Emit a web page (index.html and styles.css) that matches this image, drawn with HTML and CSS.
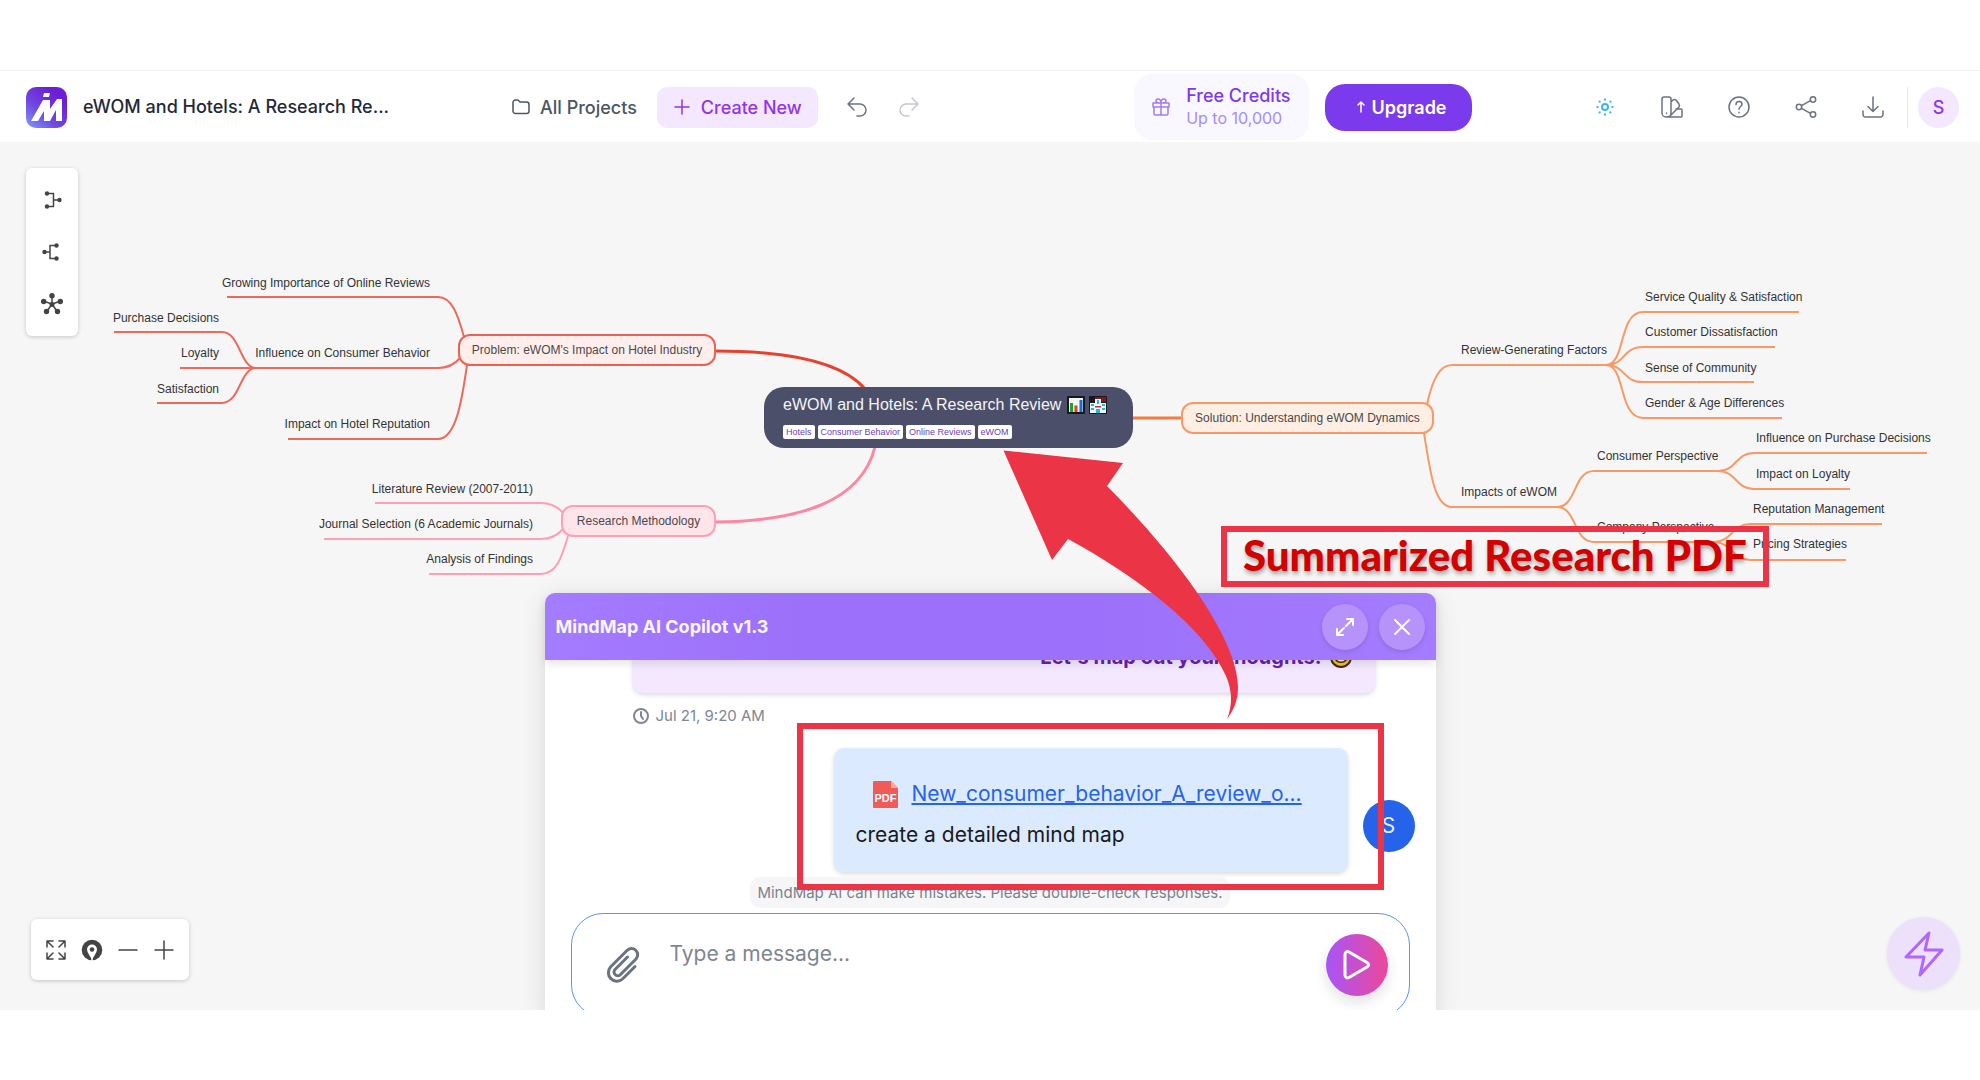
FILE: index.html
```html
<!DOCTYPE html>
<html lang="en">
<head>
<meta charset="utf-8">
<meta name="viewport" content="width=device-width, initial-scale=1">
<title>eWOM and Hotels: A Research Review</title>
<link rel="stylesheet" href="styles.css">
</head>
<body>
<header class="topbar">
  <svg class="logo" viewBox="0 0 41 41" aria-hidden="true">
    <defs><linearGradient id="logoFill" x1="0" y1="1" x2="0.7" y2="0.2"><stop offset="0" stop-color="#7f9bff"/><stop offset="0.5" stop-color="#7048e0"/><stop offset="1" stop-color="#6d1fd8"/></linearGradient></defs>
    <rect width="41" height="41" rx="10" fill="url(#logoFill)"/>
    <path d="M18 6h6l-1 4h-6zM5 34 17 13h7v9l7-10h5v22h-6V23l-6 11h-6V24l-6 10z" fill="#fff"/>
  </svg>
  <h1 class="doc-title">eWOM and Hotels: A Research Re...</h1>
  <nav class="nav">
    <a class="projects" href="#projects">
      <svg class="i18" viewBox="0 0 18 18"><path d="M1 4.500a2.500 2.500 0 0 1 2.500-2.500H6l2 2h6.500A2.500 2.500 0 0 1 17 6.500v6.500a2.500 2.500 0 0 1-2.500 2.500h-11A2.500 2.500 0 0 1 1 13z"/></svg>
      All Projects</a>
    <button class="create" type="button"><svg class="i18" viewBox="0 0 18 18"><path d="M9 2v14M2 9h14"/></svg>Create New</button>
    <button class="icon-btn undo" type="button" aria-label="Undo"><svg class="i22" viewBox="0 0 22 22"><path d="M8 2 2 8l6 6M2 8h12a6 6 0 0 1 0 12h-3"/></svg></button>
    <button class="icon-btn redo" type="button" aria-label="Redo" disabled><svg class="i22" viewBox="0 0 22 22"><path d="m14 2 6 6-6 6M20 8H8a6 6 0 0 0 0 12h3"/></svg></button>
  </nav>
  <div class="space-wide"></div>
  <button class="credits" type="button">
    <svg class="i18" viewBox="0 0 18 18"><path d="M1 5h16v4H1zM2 9h14v6.500a1.500 1.500 0 0 1-1.500 1.500h-11A1.500 1.500 0 0 1 2 15.500zM9 5v12M9 5C5 5 4 4 4 3s1-2 2-2c2 0 3 2 3 4 0-2 1-4 3-4 1 0 2 1 2 2s-1 2-5 2"/></svg>
    <span class="credits-text"><span>Free Credits</span><small>Up to 10,000</small></span>
  </button>
  <button class="upgrade" type="button"><svg class="arrow-up" viewBox="0 0 10 16"><path d="M5 13V3M2 6l3-3 3 3"/></svg>Upgrade</button>
  <div class="space-narrow"></div>
  <div class="tools">
    <button class="icon-btn sun" type="button" aria-label="Theme"><svg class="i22" viewBox="0 0 22 22"><circle cx="11" cy="11" r="3"/><path d="M11 3.300v.4M11 18.300v.4M3.300 11h.4M18.300 11h.4M5.500 5.500l.3.300M16.200 16.200l.3.300M5.500 16.500l.3-.3M16.200 5.800l.3-.3"/></svg></button>
    <button class="icon-btn" type="button" aria-label="Palette"><svg class="i22" viewBox="0 0 22 22"><path d="M3 1h5a2 2 0 0 1 2 2v14a4 4 0 0 1-4 4H5a4 4 0 0 1-4-4V3a2 2 0 0 1 2-2zM10 6l2-2c1-.8 2-.8 3 0l3 4c.8 1 .5 2 0 3l-9 9M15 13h5c1 0 1 .5 1 1v6c0 .6-.5 1-1 1H6M5.500 17v.200"/></svg></button>
    <button class="icon-btn" type="button" aria-label="Help"><svg class="i22" viewBox="0 0 22 22"><circle cx="11" cy="11" r="10"/><path d="M8 8.500C8 6.500 9.300 5.500 11 5.500s3 1.200 3 2.700c0 2.300-3 2.300-3 5M11 16.300v.400"/></svg></button>
    <button class="icon-btn" type="button" aria-label="Share"><svg class="i22" viewBox="0 0 22 22"><circle cx="18" cy="3.500" r="2.700"/><circle cx="4" cy="11" r="2.700"/><circle cx="18" cy="18.500" r="2.700"/><path d="m6.500 9.700 9-5M6.500 12.300l9 5"/></svg></button>
    <button class="icon-btn" type="button" aria-label="Download"><svg class="i22" viewBox="0 0 22 22"><path d="M11 1v14M6 10.500l5 5 5-5M1 15v3.500A2.500 2.500 0 0 0 3.500 21h15a2.500 2.500 0 0 0 2.500-2.500V15"/></svg></button>
  </div>
  <div class="account"><button class="avatar" type="button">S</button></div>
</header>

<main class="canvas">
  <section class="stage" aria-label="Mind map">
    <svg class="links" viewBox="0 142 1980 868" aria-hidden="true">
      <g class="red">
        <path d="M227 297H438C452 297 458 315 464 337M114 332H222C240 332 240 368 256 368M180 368H438C448 368 455 364 460 358M157 403H222C240 403 240 368 256 368M288 439H438C456 439 462 400 467 365"/>
        <path class="trunk" d="M715 351C790 351 842 362 865 389"/>
      </g>
      <g class="pink">
        <path d="M375 503H541C551 503 558 507 563 513M324 539H541C551 539 558 535 563 529M429 574H541C557 574 562 556 568 536"/>
        <path class="trunk" d="M715 522C800 521 861 502 875 447"/>
      </g>
      <g class="orange">
        <path d="M1427 404C1433 378 1440 365 1452 365H1606C1626 365 1618 312 1643 312H1799M1606 365C1626 365 1622 347 1643 347H1775M1606 365C1626 365 1622 382 1643 382H1754M1606 365C1626 365 1618 418 1643 418H1782"/>
        <path d="M1424 433C1430 470 1434 507 1452 507H1557C1577 507 1573 471 1594 471H1718C1737 471 1735 453 1754 453H1927M1718 471C1737 471 1735 489 1754 489H1850M1557 507C1577 507 1573 542 1594 542H1714C1732 542 1732 524 1750 524H1882M1714 542C1732 542 1732 560 1750 560H1846"/>
        <path class="trunk" d="M1132 418H1182"/>
      </g>
    </svg>
    <span class="node n-growing">Growing Importance of Online Reviews</span>
    <span class="node n-purchase">Purchase Decisions</span>
    <span class="node n-loyalty">Loyalty</span>
    <span class="node n-satisfaction">Satisfaction</span>
    <span class="node n-behavior">Influence on Consumer Behavior</span>
    <span class="node n-reputation">Impact on Hotel Reputation</span>
    <span class="node topic n-problem">Problem: eWOM's Impact on Hotel Industry</span>
    <span class="node n-literature">Literature Review (2007-2011)</span>
    <span class="node n-journal">Journal Selection (6 Academic Journals)</span>
    <span class="node n-analysis">Analysis of Findings</span>
    <span class="node topic n-method">Research Methodology</span>
    <span class="node topic n-solution">Solution: Understanding eWOM Dynamics</span>
    <span class="node n-factors">Review-Generating Factors</span>
    <span class="node n-service">Service Quality &amp; Satisfaction</span>
    <span class="node n-customer">Customer Dissatisfaction</span>
    <span class="node n-community">Sense of Community</span>
    <span class="node n-gender">Gender &amp; Age Differences</span>
    <span class="node n-impacts">Impacts of eWOM</span>
    <span class="node n-consumer">Consumer Perspective</span>
    <span class="node n-company">Company Perspective</span>
    <span class="node n-influence">Influence on Purchase Decisions</span>
    <span class="node n-impact-loyalty">Impact on Loyalty</span>
    <span class="node n-management">Reputation Management</span>
    <span class="node n-pricing">Pricing Strategies</span>
    <div class="root">
      <div class="root-title"><span>eWOM and Hotels: A Research Review</span>
        <svg class="emoji" viewBox="0 0 18 18"><rect width="18" height="18" rx="1" fill="#17181c"/><path d="M2 2h14v14H2z" fill="#f4f6f4"/><path d="M3 7h3v9H3z" fill="#17a82b"/><path d="M7.500 9.500h3V16h-3z" fill="#e2431e"/><path d="M12.500 4h3v12h-3z" fill="#1572d3"/></svg>
        <svg class="emoji" viewBox="0 0 18 18"><rect width="18" height="18" rx="1" fill="#17181c"/><path d="M6 1h11v5H6z" fill="#8c1220"/><path d="M1 7h5V3h6v4h5v10H1z" fill="#eef8fa"/><path d="M2 8h3v2H2zM2 12h3v2H2zM13 8h3v2h-3zM13 12h3v2h-3zM7 13h4v4H7zM8 4h2v4H8z" fill="#22b8dc"/><path d="M6 10h6v1.500H6z" fill="#c2303c"/></svg>
      </div>
      <div class="tags"><span>Hotels</span><span>Consumer Behavior</span><span>Online Reviews</span><span>eWOM</span></div>
    </div>
  </section>

  <div class="layouts card">
    <button type="button" aria-label="Left layout"><svg class="i22" viewBox="0 0 22 22"><path d="M6 4.500h6.500v13H6M12.500 11H18"/><g class="dots"><circle cx="6" cy="4.500" r="2.200"/><circle cx="6" cy="17.500" r="2.200"/><circle cx="18.500" cy="11" r="2.200"/></g></svg></button>
    <button type="button" aria-label="Right layout"><svg class="i22" viewBox="0 0 22 22"><path d="M15 4.500H9v13h6M9 11H4"/><g class="dots"><circle cx="15.500" cy="4.500" r="2.200"/><circle cx="15.500" cy="17.500" r="2.200"/><circle cx="3.500" cy="11" r="2.200"/></g></svg></button>
    <button type="button" aria-label="Radial layout"><svg class="i22" viewBox="0 0 22 22"><path d="M11 11V2M11 11l9-3M11 11 2 8M11 11l-5.500 8M11 11l5.500 8"/><g class="dots"><circle cx="11" cy="2.800" r="2.700"/><circle cx="19.300" cy="8.500" r="2.700"/><circle cx="2.700" cy="8.500" r="2.700"/><circle cx="5.500" cy="18.500" r="2.700"/><circle cx="16.500" cy="18.500" r="2.700"/><circle cx="11" cy="11.500" r="2.500"/></g></svg></button>
  </div>

  <div class="zoom card">
    <button type="button" aria-label="Fit"><svg class="i22" viewBox="0 0 22 22"><path d="M2 8V2h6M2 2l6 6M14 2h6v6M20 2l-6 6M2 14v6h6M2 20l6-6M20 14v6h-6M20 20l-6-6"/></svg></button>
    <button type="button" aria-label="Center"><svg class="i22" viewBox="0 0 22 22"><circle class="fill" cx="11" cy="11" r="10.300"/><path class="pin" d="M11 20.500C9 17 6 13.500 6 10.500a5 5 0 0 1 10 0c0 3-3 6.500-5 10z"/><circle class="fill" cx="11" cy="10.500" r="2.300"/><path class="pin" d="M10.300 17h1.400v5h-1.400z"/></svg></button>
    <button type="button" aria-label="Zoom out"><svg class="i22" viewBox="0 0 22 22"><path d="M2 11h18"/></svg></button>
    <button type="button" aria-label="Zoom in"><svg class="i22" viewBox="0 0 22 22"><path d="M2 11h18M11 2v18"/></svg></button>
  </div>

  <button class="bolt" type="button" aria-label="Quick actions"><svg viewBox="0 0 40 46"><path d="M25 2 2 26h18l-4 18 22-25H21z"/></svg></button>

  <section class="copilot">
    <header class="copilot-head">
      <h2>MindMap AI Copilot v1.3</h2>
      <button class="round" type="button" aria-label="Expand"><svg class="i18" viewBox="0 0 18 18"><path d="M11 1h6v6M17 1l-7 7M7 17H1v-6M1 17l7-7"/></svg></button>
      <button class="round" type="button" aria-label="Close"><svg class="i18" viewBox="0 0 18 18"><path d="m2 2 14 14M16 2 2 16"/></svg></button>
    </header>
    <div class="messages">
      <div class="bot-msg"><span>Let's map out your thoughts!</span><svg class="smile" viewBox="0 0 22 22"><circle cx="11" cy="11" r="10" fill="#fbbf24" stroke="#3b2a20" stroke-width="2"/><path d="M5 11c1 7 11 7 12 0z" fill="#fff3c4" stroke="#3b2a20" stroke-width="1.500"/></svg></div>
      <div class="stamp"><svg viewBox="0 0 16 16"><circle cx="8" cy="8" r="7"/><path d="M8 4v4l2 3"/></svg><time>Jul 21, 9:20 AM</time></div>
      <div class="user-row">
        <div class="user-msg">
          <div class="file">
            <svg class="pdf" viewBox="0 0 25 27"><path d="M1 0h17l7 7v19a1 1 0 0 1-1 1H1a1 1 0 0 1-1-1V1a1 1 0 0 1 1-1z" fill="#ef5b56"/><path d="m18 0 7 7h-7z" fill="#f6a8a4"/><text x="12.500" y="21" text-anchor="middle">PDF</text></svg>
            <a href="#file">New_consumer_behavior_A_review_o...</a>
          </div>
          <p>create a detailed mind map</p>
        </div>
        <span class="user-avatar">S</span>
      </div>
    </div>
    <p class="disclaimer">MindMap AI can make mistakes. Please double-check responses.</p>
    <form class="composer">
      <button class="attach" type="button" aria-label="Attach"><svg viewBox="0 0 34 38"><path d="M29 20.500 16.500 33a8.500 8.500 0 0 1-12-12L21 4.500a6 6 0 0 1 9 8.500L14.500 28.500a3.700 3.700 0 0 1-5.500-5L21.500 11"/></svg></button>
      <textarea aria-label="Message" placeholder="Type a message..."></textarea>
      <button class="send" type="button" aria-label="Send"><svg viewBox="0 0 30 32"><path d="M3 5.500C3 3 5 2 7 3l18 10.500c2 1.200 2 3.300 0 4.500L7 28.500c-2 1-4 0-4-2.500z"/></svg></button>
    </form>
  </section>

  <div class="notes">
    <div class="mark-label">Summarized Research PDF</div>
    <div class="mark-prompt"></div>
    <svg class="mark-arrow" viewBox="1003 450 236 270" aria-hidden="true"><path d="M1003.500 450.500 1123 463 1107 486C1190 570 1238 645 1238 687C1238 700 1234 710 1227 719C1232 706 1233 692 1226 676C1205 628 1138 577 1068 539L1052 560z"/></svg>
  </div>
</main>
</body>
</html>
```
FILE: styles.css
```css
* { box-sizing: border-box; }

body {
  margin: 0;
  padding: 70px 0;
  min-height: 100vh;
  display: flex;
  flex-direction: column;
  background: #fff;
  font-family: Inter, "Liberation Sans", sans-serif;
}

button { font: inherit; padding: 0; border: 0; background: none; color: inherit; }
a { color: inherit; text-decoration: none; }
h1, h2, p { margin: 0; }
svg { display: block; flex: none; fill: none; stroke: none; }
button svg, .projects svg, .stamp svg {
  stroke: currentColor;
  stroke-width: 1.5;
  stroke-linecap: round;
  stroke-linejoin: round;
}

.i18 { width: 18px; height: 18px; }
.i22 { width: 22px; height: 22px; }

/* Top bar */
.topbar {
  height: 72px;
  border-top: 1px solid #f1f1f3;
  padding: 1px 21px 0 26px;
  display: flex;
  align-items: center;
  color: #6b7280;
}
.logo { width: 41px; height: 41px; }
.doc-title {
  width: 320px;
  margin: 0 109px 0 16px;
  font-size: 18px;
  font-weight: 500;
  line-height: 24px;
  white-space: nowrap;
  color: #1f2937;
}
.nav { display: flex; align-items: center; font-size: 18px; font-weight: 500; white-space: nowrap; }
.projects { display: flex; align-items: center; gap: 10px; color: #4b5563; margin-right: 20px; }
.create {
  height: 41px;
  padding: 0 16px;
  display: flex;
  align-items: center;
  gap: 10px;
  border-radius: 10px;
  background: #f3e8ff;
  color: #9333ea;
}
.undo { margin-left: 28px; }
.redo { margin-left: 30px; color: #c4c7cd; }
.space-wide { flex: 7; }
.space-narrow { flex: 4; }
.credits {
  height: 66px;
  padding: 0 18px;
  display: flex;
  align-items: center;
  gap: 16px;
  border-radius: 18px;
  background: #f9f7ff;
  color: #a27bf0;
  text-align: left;
}
.credits-text { display: flex; flex-direction: column; font-size: 18px; line-height: 22px; font-weight: 500; color: #7c3aed; }
.credits-text small { font-size: 16px; font-weight: 400; color: #a78bfa; }
.upgrade {
  height: 47px;
  margin-left: 16px;
  padding: 0 25px 0 31px;
  display: flex;
  align-items: center;
  gap: 6px;
  border-radius: 20px;
  background: #7c3aed;
  color: #fff;
  font-size: 18px;
  font-weight: 600;
}
.arrow-up { width: 10px; height: 16px; }
.tools { display: flex; gap: 45px; }
.sun { color: #38b6f1; }
.sun svg { stroke-width: 2; }
.account { margin-left: 23px; padding-left: 10px; border-left: 1px solid #e5e7eb; }
.avatar { width: 41px; height: 41px; border-radius: 50%; background: #f3e8ff; color: #9333ea; font-size: 18px; font-weight: 500; }

/* Canvas */
.canvas {
  flex: 1;
  min-height: 868px;
  position: relative;
  overflow: hidden;
  background: #f6f6f6;
}
.stage, .notes { position: absolute; top: 0; left: calc(50% - 990px); width: 1980px; height: 868px; }
.links { width: 100%; height: 100%; }
.links path { stroke-width: 2; }
.links .trunk { stroke-width: 3; }
.red { stroke: #ea6b5d; }
.red .trunk { stroke: #e5432f; }
.pink { stroke: #ff9fb5; }
.pink .trunk { stroke: #ff86a3; }
.orange { stroke: #f79a68; }
.orange .trunk { stroke: #f47c3c; }

.node {
  position: absolute;
  font: 12px/16px "Liberation Sans", Arial, sans-serif;
  color: #333;
  white-space: nowrap;
}
.topic {
  height: 32px;
  display: flex;
  align-items: center;
  justify-content: center;
  border: 2px solid;
  border-radius: 12px;
}
.topic { color: #4a4a4a; }
.n-growing { right: 1550px; top: 133px; }
.n-behavior { right: 1550px; top: 203px; }
.n-reputation { right: 1550px; top: 274px; }
.n-purchase { right: 1761px; top: 168px; }
.n-loyalty { right: 1761px; top: 203px; }
.n-satisfaction { right: 1761px; top: 239px; }
.n-problem { left: 458px; top: 192px; width: 258px; background: #ffeeeb; border-color: #ea6254; }
.n-literature { right: 1447px; top: 339px; }
.n-journal { right: 1447px; top: 374px; }
.n-analysis { right: 1447px; top: 409px; }
.n-method { left: 561px; top: 363px; width: 155px; background: #ffe4ea; border-color: #ff9fb5; }
.n-solution { left: 1181px; top: 260px; width: 253px; background: #ffeee3; border-color: #f79a68; }
.n-factors { left: 1461px; top: 200px; }
.n-service { left: 1645px; top: 147px; }
.n-customer { left: 1645px; top: 182px; }
.n-community { left: 1645px; top: 218px; }
.n-gender { left: 1645px; top: 253px; }
.n-impacts { left: 1461px; top: 342px; }
.n-consumer { left: 1597px; top: 306px; }
.n-company { left: 1597px; top: 377px; }
.n-influence { left: 1756px; top: 288px; }
.n-impact-loyalty { left: 1756px; top: 324px; }
.n-management { left: 1753px; top: 359px; }
.n-pricing { left: 1753px; top: 394px; }

.root {
  position: absolute;
  left: 764px;
  top: 245px;
  width: 369px;
  height: 61px;
  padding: 8px 19px;
  border-radius: 20px;
  background: #4c4f69;
  color: #f5f5f7;
  font-family: "Liberation Sans", Arial, sans-serif;
}
.root-title { display: flex; align-items: center; gap: 4px; font-size: 16px; line-height: 20px; white-space: nowrap; }
.root-title span { margin-right: 2px; }
.emoji { width: 18px; height: 18px; }
.tags { display: flex; gap: 3px; margin-top: 10px; }
.tags span { padding: 0 3px; border-radius: 2px; background: #fff; color: #6b3fb8; font-size: 9px; line-height: 14px; }

/* Floating cards */
.card { position: absolute; display: flex; align-items: center; background: #fff; border-radius: 6px; box-shadow: 0 1px 4px rgba(0, 0, 0, 0.2); color: #444; }
.card .dots, .card .fill { fill: #444; stroke: none; }
.card .pin { fill: #fff; stroke: none; }
.layouts { left: 26px; top: 26px; width: 52px; height: 168px; flex-direction: column; justify-content: center; gap: 30px; }
.zoom { left: 31px; bottom: 30px; width: 158px; height: 61px; justify-content: center; gap: 14px; }
.bolt {
  position: absolute;
  right: 20px;
  bottom: 20px;
  width: 73px;
  height: 73px;
  display: grid;
  place-items: center;
  border-radius: 50%;
  background: #ece0fb;
  color: #b266ff;
  box-shadow: 0 1px 4px rgba(0, 0, 0, 0.08);
}
.bolt svg { width: 40px; height: 46px; stroke-width: 3; }

/* Copilot panel */
.copilot {
  position: absolute;
  bottom: -7px;
  left: 27.5%;
  width: 45%;
  height: 424px;
  display: flex;
  flex-direction: column;
  align-items: center;
  border-radius: 10px 10px 0 0;
  background: #fff;
  box-shadow: 0 4px 24px rgba(0, 0, 0, 0.12);
}
.copilot-head {
  position: relative;
  align-self: stretch;
  height: 67px;
  padding: 0 11px;
  display: flex;
  align-items: center;
  gap: 11px;
  border-radius: 10px 10px 0 0;
  background: linear-gradient(90deg, #a47cff, #9c70fa 30%, #9c70fa 60%, #a47cff);
  box-shadow: 0 4px 8px rgba(0, 0, 0, 0.1);
  color: #fff;
}
.copilot-head h2 { flex: 1; font-size: 18px; line-height: 24px; font-weight: 700; color: #fbf5ff; }
.round { width: 46px; height: 46px; display: grid; place-items: center; border-radius: 50%; background: #b693fb; box-shadow: 0 2px 5px rgba(0, 0, 0, 0.12); }
.round svg { stroke-width: 2; }
.messages {
  align-self: stretch;
  flex: 1;
  min-height: 0;
  padding: 0 21px 5px 88px;
  display: flex;
  flex-direction: column;
  justify-content: flex-end;
  overflow: hidden;
}
.bot-msg {
  flex: none;
  height: 60px;
  margin-right: 40px;
  padding: 10px 23px 0;
  display: flex;
  justify-content: flex-end;
  gap: 8px;
  border-radius: 10px;
  background: #f3e8ff;
  box-shadow: 0 2px 5px rgba(0, 0, 0, 0.15);
  color: #6b21a8;
  font-size: 20px;
  line-height: 28px;
  font-weight: 700;
}
.smile { width: 22px; height: 22px; margin-top: 3px; }
.stamp { display: flex; align-items: center; gap: 7px; margin: 11px 0 20px; font-size: 15px; line-height: 24px; color: #808692; }
.stamp svg { width: 16px; height: 16px; stroke-width: 2; }
.user-row { flex: none; display: flex; align-items: flex-end; justify-content: flex-end; gap: 15px; }
.user-msg {
  width: 514px;
  height: 124px;
  padding: 30px 22px 0;
  border-radius: 10px;
  background: #dbeafe;
  box-shadow: 0 2px 5px rgba(0, 0, 0, 0.15);
  color: #1a1a1a;
  font-size: 21px;
  line-height: 32px;
}
.file { display: flex; align-items: center; gap: 14px; padding-left: 17px; margin-bottom: 9px; }
.file a { color: #2563eb; text-decoration: underline; white-space: nowrap; }
.pdf { width: 25px; height: 27px; }
.pdf text { fill: #fff; font: 700 11px "Liberation Sans", sans-serif; }
.user-avatar { width: 52px; height: 52px; margin-bottom: 20px; border-radius: 50%; background: #2563eb; color: #e8efff; font-size: 21px; line-height: 52px; text-align: center; }
.disclaimer { margin-bottom: 5px; padding: 0 7px; border-radius: 10px; background: #f6f6f8; color: #7b818c; font-size: 15px; line-height: 31px; white-space: nowrap; }
.composer {
  align-self: stretch;
  flex: none;
  height: 104px;
  margin: 0 26px;
  padding: 20px 21px 20px 34px;
  display: flex;
  align-items: center;
  border: 1px solid #5b93f5;
  border-radius: 32px;
  background: #fff;
}
.attach { color: #6b7280; }
.attach svg { width: 34px; height: 38px; stroke-width: 3; }
.composer textarea {
  flex: 1;
  min-width: 0;
  height: 62px;
  margin: 0 30px;
  padding: 6px 0 0;
  border: 0;
  outline: 0;
  resize: none;
  background: none;
  color: #1a1a1a;
  font: 21px/28px Inter, sans-serif;
}
.composer textarea::placeholder { color: #7f8590; }
.send { width: 62px; height: 62px; display: grid; place-items: center; border-radius: 50%; background: linear-gradient(90deg, #a855f7, #ec4899); color: #fff; box-shadow: 0 6px 14px rgba(0, 0, 0, 0.12); }
.send svg { width: 30px; height: 32px; stroke-width: 3; }

/* Annotations drawn over the screen */
.notes { pointer-events: none; }
.mark-label, .mark-prompt { position: absolute; border: 6px solid #eb3446; }
.mark-label {
  left: 1221px;
  top: 384px;
  width: 548px;
  height: 61px;
  padding-left: 16px;
  color: #d40000;
  font: 900 42px/46px Lato, sans-serif;
  text-shadow: 1px 3px 4px rgba(0, 0, 0, 0.35);
  white-space: nowrap;
}
.mark-prompt { left: 797px; top: 581px; width: 587px; height: 167px; }
.mark-arrow { position: absolute; left: 1003px; top: 308px; width: 236px; height: 270px; fill: #eb3446; }
```
